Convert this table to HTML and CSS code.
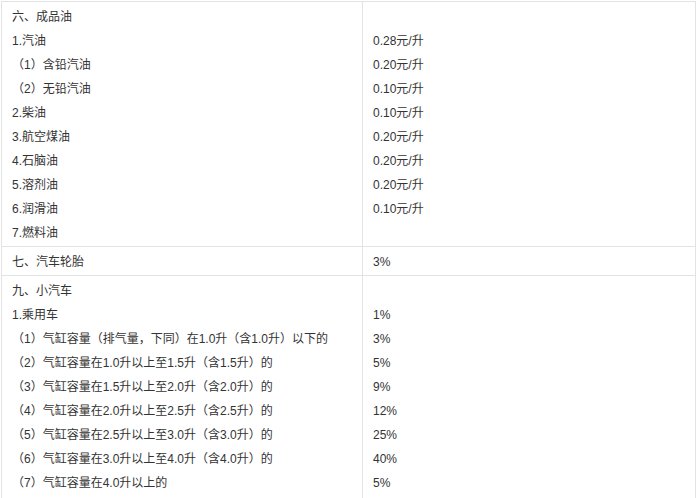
FILE: index.html
```html
<!DOCTYPE html>
<html lang="zh">
<head>
<meta charset="utf-8">
<link rel="stylesheet" href="styles.css">
</head>
<body>
<table class="tax">
  <tr>
    <td class="name">
      <p>六、成品油</p>
      <p>1.汽油</p>
      <p>（1）含铅汽油</p>
      <p>（2）无铅汽油</p>
      <p>2.柴油</p>
      <p>3.航空煤油</p>
      <p>4.石脑油</p>
      <p>5.溶剂油</p>
      <p>6.润滑油</p>
      <p>7.燃料油</p>
    </td>
    <td class="rate">
      <p>&nbsp;</p>
      <p>0.28元/升</p>
      <p>0.20元/升</p>
      <p>0.10元/升</p>
      <p>0.10元/升</p>
      <p>0.20元/升</p>
      <p>0.20元/升</p>
      <p>0.20元/升</p>
      <p>0.10元/升</p>
      <p>&nbsp;</p>
    </td>
  </tr>
  <tr>
    <td class="name"><p>七、汽车轮胎</p></td>
    <td class="rate"><p>3%</p></td>
  </tr>
  <tr>
    <td class="name">
      <p>九、小汽车</p>
      <p>1.乘用车</p>
      <p>（1）气缸容量（排气量，下同）在1.0升（含1.0升）以下的</p>
      <p>（2）气缸容量在1.0升以上至1.5升（含1.5升）的</p>
      <p>（3）气缸容量在1.5升以上至2.0升（含2.0升）的</p>
      <p>（4）气缸容量在2.0升以上至2.5升（含2.5升）的</p>
      <p>（5）气缸容量在2.5升以上至3.0升（含3.0升）的</p>
      <p>（6）气缸容量在3.0升以上至4.0升（含4.0升）的</p>
      <p>（7）气缸容量在4.0升以上的</p>
      <p>&nbsp;</p>
    </td>
    <td class="rate">
      <p>&nbsp;</p>
      <p>1%</p>
      <p>3%</p>
      <p>5%</p>
      <p>9%</p>
      <p>12%</p>
      <p>25%</p>
      <p>40%</p>
      <p>5%</p>
      <p>&nbsp;</p>
    </td>
  </tr>
</table>
</body>
</html>
```
FILE: styles.css
```css
html, body {
  margin: 0;
  padding: 0;
  background: #fff;
}
body {
  padding: 1px 0 0 1px;
  font-family: "Liberation Sans", "Noto Sans CJK SC", sans-serif;
  font-size: 12px;
  color: #333;
}
.tax {
  width: 695px;
  border-collapse: collapse;
  table-layout: fixed;
}
.tax td {
  border: 1px solid #e3e3e3;
  vertical-align: top;
  padding: 3px 10px 1px 10px;
}
.tax td.name {
  width: 340px;
}
.tax p {
  margin: 0;
  line-height: 24px;
  height: 24px;
  white-space: nowrap;
}
```
